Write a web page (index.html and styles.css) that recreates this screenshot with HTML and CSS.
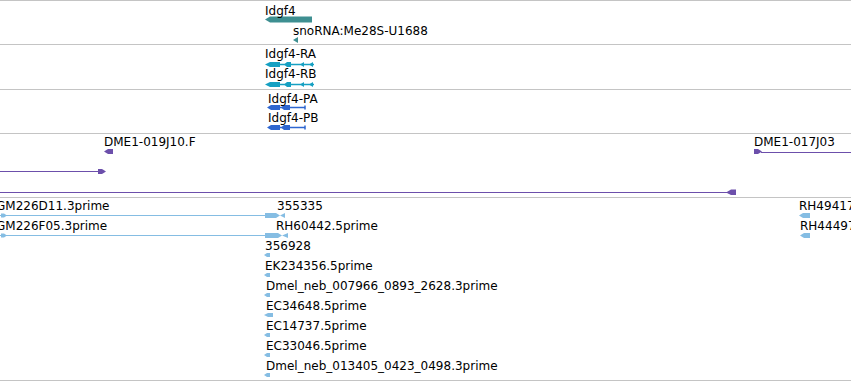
FILE: index.html
```html
<!DOCTYPE html>
<html lang="en">
<head>
  <meta charset="UTF-8" />
  <title>Idgf4 region</title>
  <link rel="stylesheet" href="styles.css">
</head>
<body>
  <div class="tracks">
    <!-- Gene -->
    <div class="track track-gene">
      <svg class="glyphs" width="851" height="43">
        <polygon class="gene" points="265,18.5 270,15.5 312,15.5 312,21.5 270,21.5" />
        <polygon class="gene" points="293,39 298,36 298,42" />
      </svg>
      <span class="label" style="left:265px;top:3px">Idgf4</span>
      <span class="label" style="left:293px;top:23px">snoRNA:Me28S-U1688</span>
    </div>

    <!-- Transcripts -->
    <div class="track track-mrna">
      <svg class="glyphs" width="851" height="44">
        <g class="mrna" transform="translate(0,17)">
          <polygon points="265,2.5 270,0 280,0 280,5 270,5" />
          <polygon points="284,2.5 287,0 291,0 291,5 287,5" />
          <line x1="280" y1="2.5" x2="314" y2="2.5" />
          <polygon points="300,2.5 304,0 304,5" />
          <polygon points="309,2.5 313,0 313,5" />
        </g>
        <g class="mrna" transform="translate(0,37)">
          <polygon points="265,2.5 270,0 280,0 280,5 270,5" />
          <polygon points="284,2.5 287,0 291,0 291,5 287,5" />
          <line x1="280" y1="2.5" x2="314" y2="2.5" />
          <polygon points="300,2.5 304,0 304,5" />
          <polygon points="309,2.5 313,0 313,5" />
        </g>
      </svg>
      <span class="label" style="left:265px;top:2px">Idgf4-RA</span>
      <span class="label" style="left:265px;top:22px">Idgf4-RB</span>
    </div>

    <!-- Proteins -->
    <div class="track track-cds">
      <svg class="glyphs" width="851" height="43">
        <g class="cds" transform="translate(0,15)">
          <polygon points="267,2.5 271,0 280,0 280,5 271,5" />
          <polygon points="281,2.5 284,0 290,0 290,5 284,5" />
          <line x1="280" y1="2.5" x2="305" y2="2.5" />
          <line x1="305" y1="0.5" x2="305" y2="4.5" />
        </g>
        <g class="cds" transform="translate(0,35)">
          <polygon points="267,2.5 271,0 280,0 280,5 271,5" />
          <polygon points="281,2.5 284,0 290,0 290,5 284,5" />
          <line x1="280" y1="2.5" x2="305" y2="2.5" />
          <line x1="305" y1="0.5" x2="305" y2="4.5" />
        </g>
      </svg>
      <span class="label" style="left:268px;top:2px">Idgf4-PA</span>
      <span class="label" style="left:268px;top:21px">Idgf4-PB</span>
    </div>

    <!-- BAC ends -->
    <div class="track track-bac">
      <svg class="glyphs" width="851" height="63">
        <g class="bac">
          <polygon points="104,17.5 108,15 113,15 113,20 108,20" />
          <line x1="0" y1="37.5" x2="99" y2="37.5" />
          <polygon points="98,35 102,35 106,37.5 102,40 98,40" />
          <line x1="0" y1="58.5" x2="727" y2="58.5" />
          <polygon points="726,58.5 731,55.5 736,55.5 736,61 731,61" />
          <polygon points="754,15 758,15 762,17.5 758,20 754,20" />
          <line x1="761" y1="18.5" x2="851" y2="18.5" />
        </g>
      </svg>
      <span class="label" style="left:104px;top:1px">DME1-019J10.F</span>
      <span class="label" style="left:754px;top:1px">DME1-017J03</span>
    </div>

    <!-- ESTs -->
    <div class="track track-est">
      <svg class="glyphs" width="851" height="182">
        <g class="est">
          <line x1="0" y1="17.5" x2="266" y2="17.5" />
          <polygon points="1,15.5 4,15.5 7,17.5 4,19.5 1,19.5" />
          <polygon points="265,15 276,15 280,17.5 285,15 285,20 280,17.5 276,20 265,20" />
          <line x1="0" y1="37.5" x2="266" y2="37.5" />
          <polygon points="1,35.5 4,35.5 7,37.5 4,39.5 1,39.5" />
          <polygon points="265,35 278,35 282,37.5 288,35 288,40 282,37.5 278,40 265,40" />
          <polygon points="264,57 267,55 270,55 270,59 267,59" />
          <polygon points="264,77 267,75 270,75 270,79 267,79" />
          <polygon points="264,97 267,95 270,95 270,99 267,99" />
          <polygon points="264,117 268,115 273,115 273,119 268,119" />
          <polygon points="264,137 267,135 270,135 270,139 267,139" />
          <polygon points="264,157 267,155 270,155 270,159 267,159" />
          <polygon points="264,177 267,175 270,175 270,179 267,179" />
          <polygon points="799,17.5 803,15 810,15 810,20 803,20" />
          <polygon points="800,37.5 804,35 810,35 810,40 804,40" />
        </g>
      </svg>
      <span class="label" style="left:-4px;top:1px">GM226D11.3prime</span>
      <span class="label" style="left:277px;top:1px">355335</span>
      <span class="label" style="left:799px;top:1px">RH49417.5prime</span>
      <span class="label" style="left:-4px;top:21px">GM226F05.3prime</span>
      <span class="label" style="left:276px;top:21px">RH60442.5prime</span>
      <span class="label" style="left:800px;top:21px">RH44497.5prime</span>
      <span class="label" style="left:265px;top:41px">356928</span>
      <span class="label" style="left:265px;top:61px">EK234356.5prime</span>
      <span class="label" style="left:266px;top:81px">Dmel_neb_007966_0893_2628.3prime</span>
      <span class="label" style="left:266px;top:101px">EC34648.5prime</span>
      <span class="label" style="left:266px;top:121px">EC14737.5prime</span>
      <span class="label" style="left:266px;top:141px">EC33046.5prime</span>
      <span class="label" style="left:266px;top:161px">Dmel_neb_013405_0423_0498.3prime</span>
    </div>
  </div>
</body>
</html>
```

FILE: styles.css
```css
/* Base */
html, body { margin: 0; padding: 0; background: #fff; overflow: hidden; }
body { font-family: 'DejaVu Sans', 'Liberation Sans', sans-serif; font-size: 12px; color: #000; }

/* Track stack */
.tracks { width: 851px; border-top: 1px solid #c4c4c4; }
.track { position: relative; overflow: hidden; border-bottom: 1px solid #c4c4c4; }
.track-gene { height: 43px; }
.track-mrna { height: 44px; }
.track-cds { height: 43px; }
.track-bac { height: 63px; }
.track-est { height: 182px; }

/* Feature canvas */
.glyphs { position: absolute; top: 0; left: 0; display: block; }
.label { position: absolute; white-space: nowrap; line-height: 14px; }

/* Feature colours */
.gene { fill: #3e8f91; }
.mrna polygon { fill: #16a0c2; }
.mrna line { stroke: #16a0c2; stroke-width: 1.5; }
.cds polygon { fill: #2f67d0; }
.cds line { stroke: #2f67d0; stroke-width: 1.5; }
.bac polygon { fill: #6c4fab; }
.bac line { stroke: #6c4fab; stroke-width: 1; }
.est polygon { fill: #85bde3; }
.est line { stroke: #85bde3; stroke-width: 1; }
```
